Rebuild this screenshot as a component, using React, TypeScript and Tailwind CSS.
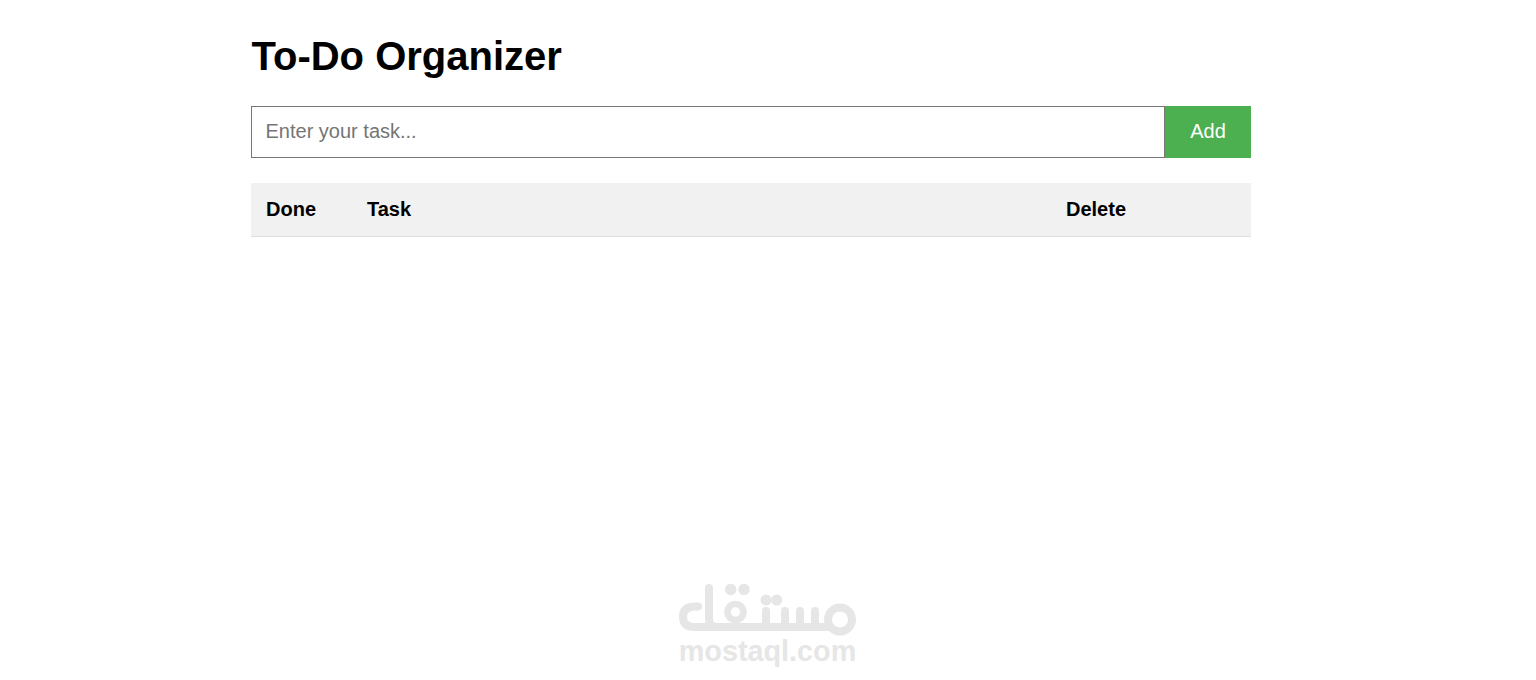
export default function App() {
  const font = { fontFamily: '"Liberation Sans", Arial, sans-serif' };
  return (
    <div className="relative min-h-[680px] bg-white overflow-hidden" style={font}>
      <div className="w-[1000px] ml-[251px]">
        <h1 className="text-[40px] leading-[46px] font-bold text-black pt-[33px] pb-[27px] pl-[0.5px]">To-Do Organizer</h1>
        <div className="flex h-[52px]">
          <input
            placeholder="Enter your task..."
            className="flex-1 h-[52px] border border-[#767676] pl-[13.5px] pr-[14px] pb-[2px] text-[20px] text-black placeholder:text-[#757575] bg-white outline-none"
          />
          <button className="w-[86px] h-[52px] pb-[2px] bg-[#4caf50] text-white text-[20px]">Add</button>
        </div>
        <div className="flex h-[54px] mt-[25px] pb-[2px] items-center bg-[#f1f1f1] border-b border-[#dddddd] text-[20px] font-bold text-black">
          <div className="w-[100px] pl-[15px]">Done</div>
          <div className="w-[700px] pl-[16px]">Task</div>
          <div className="w-[200px] pl-[15px]">Delete</div>
        </div>
      </div>
      <div className="absolute left-[678px] top-[584px] w-[180px] flex flex-col items-center">
        <svg width="180" height="58" viewBox="0 0 180 58" fill="none" stroke="#e6e6e6" strokeWidth="8" strokeLinecap="round" strokeLinejoin="round">
          <path d="M31 4V35Q31 43 39 43" />
          <path d="M20 22.5H17Q5 22.5 5 33Q5 43 17 43H150" />
          <circle cx="57.5" cy="28" r="8" strokeWidth="6.5" />
          <circle cx="162" cy="35.5" r="12" strokeWidth="8" />
          <path d="M88 43V27M107 43V27M122 43V27M137 43V27" />
          <circle cx="52.7" cy="5.5" r="5.7" fill="#e6e6e6" stroke="none" />
          <circle cx="66" cy="5.5" r="5.7" fill="#e6e6e6" stroke="none" />
          <circle cx="88" cy="16" r="5.5" fill="#e6e6e6" stroke="none" />
          <circle cx="98.7" cy="16" r="5.5" fill="#e6e6e6" stroke="none" />
        </svg>
        <div className="text-[28.8px] leading-[26px] font-bold text-[#e6e6e6] -mt-[4px] -ml-[1px]">mostaql.com</div>
      </div>
    </div>
  );
}
